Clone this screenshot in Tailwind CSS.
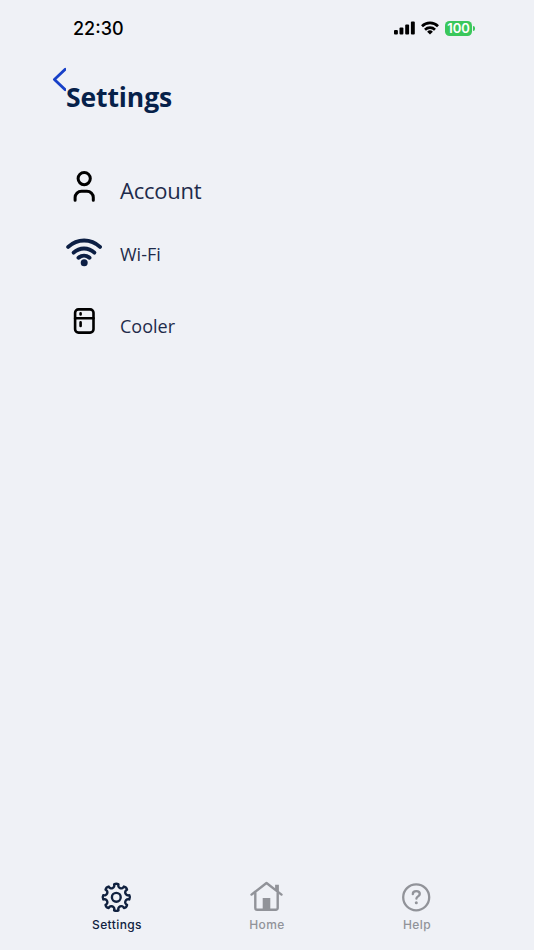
<!DOCTYPE html>
<html lang="en">
<head>
  <meta charset="UTF-8" />
  <meta name="viewport" content="width=device-width, initial-scale=1.0" />
  <title>Settings</title>
  <script src="https://cdn.jsdelivr.net/npm/@tailwindcss/browser@4"></script>
</head>
<body class="bg-[#eff1f6] text-[#1e2b4b] font-['Open_Sans',sans-serif] h-screen flex flex-col overflow-hidden">
  <!-- Status bar -->
  <div class="h-14 pl-[73px] pr-[59px] flex items-center justify-between text-black font-[Inter,sans-serif]">
    <span class="pt-px text-[18px] leading-none font-medium">22:30</span>
    <div class="flex items-center gap-[6px]">
      <svg class="w-[21px] h-[14px]" viewBox="0 0 21 14" fill="currentColor">
        <rect x="0" y="9" width="3.9" height="4.6" rx="1" />
        <rect x="5.5" y="6.5" width="3.9" height="7.1" rx="1" />
        <rect x="11.2" y="3.6" width="3.9" height="10" rx="1" />
        <rect x="16.9" y="0.6" width="3.9" height="13" rx="1" />
      </svg>
      <svg class="w-[18px] h-[14px]" viewBox="0 0 18 14" fill="none" stroke="currentColor" stroke-width="2.7">
        <path d="M1 5.2a11.4 11.4 0 0 1 16 0" />
        <path d="M4 8.7a7.1 7.1 0 0 1 10 0" />
        <path d="M9 13.6L6.1 10.8a4.1 4.1 0 0 1 5.8 0Z" fill="currentColor" stroke="none" />
      </svg>
      <div class="flex items-center gap-px">
        <div class="w-[27px] h-[15px] rounded-[4.5px] bg-[#3ac75b] text-white text-[13px] leading-none font-semibold flex items-center justify-center">100</div>
        <div class="w-[2px] h-[5px] rounded-r-full bg-[#3ac75b]"></div>
      </div>
    </div>
  </div>

  <!-- Header -->
  <header class="h-[94px] pl-[52px] pt-[11px] flex items-start">
    <svg class="w-[14px] h-[25px] shrink-0" viewBox="0 0 14 25" fill="none" stroke="#1740c8" stroke-width="2.8" stroke-linecap="round" stroke-linejoin="round">
      <path d="M13.2 2.3L2.4 12.4L13.2 22.7" />
    </svg>
    <h1 class="mt-[12px] text-[26.5px] leading-9 font-bold tracking-[-0.1px] text-[#06214a]">Settings</h1>
  </header>

  <!-- Menu -->
  <main class="flex-1 pl-[66px]">
    <a class="h-[73px] flex items-start gap-[18px]">
      <svg class="w-9 h-9 mt-[18px]" viewBox="0 0 36 36" fill="none" stroke="#000" stroke-width="3" stroke-linecap="round">
        <circle cx="18.2" cy="10.6" r="6.1" />
        <path d="M9.1 32.2v-2.6a6.4 6.4 0 0 1 6.4-6.4h5.4a6.4 6.4 0 0 1 6.4 6.4v2.6" />
      </svg>
      <span class="mt-[24px] text-[22px] leading-8 tracking-[-0.25px]">Account</span>
    </a>
    <a class="h-[72px] flex items-start gap-[18px]">
      <svg class="w-9 h-[30px] mt-[14px]" viewBox="0 0 36 30" fill="none" stroke="#0c1f44" stroke-width="3.9" stroke-linecap="round">
        <path d="M2.2 9.9c9.2-8.6 22.6-8.6 31.8 0" />
        <path d="M7.6 15.7c6-5.7 14.8-5.7 20.8 0" />
        <path d="M12.5 20.8c3.2-2.8 7.8-2.8 11 0" />
        <circle cx="18.2" cy="25.8" r="3.5" fill="#0c1f44" stroke="none" />
      </svg>
      <span class="mt-[17px] text-[18px] leading-7">Wi-Fi</span>
    </a>
    <a class="h-[72px] flex items-start gap-[18px]">
      <svg class="w-9 h-[30px] mt-[11px]" viewBox="0 0 36 30" fill="none" stroke="#000" stroke-width="2.6" stroke-linecap="round">
        <rect x="9.1" y="3.4" width="18.4" height="23.2" rx="3.4" />
        <path d="M9.1 12.2h18.4M14.6 7.4v1M14.6 16.4v3.6" />
      </svg>
      <span class="mt-[17px] text-[18px] leading-7">Cooler</span>
    </a>
  </main>

  <!-- Tab bar -->
  <nav class="h-[73px] pl-[41px] pr-[43px] grid grid-cols-3 text-[12px] leading-4 font-medium tracking-[0.4px] text-[#919399] font-[Inter,sans-serif]">
    <a class="flex flex-col items-center gap-1 pt-1 text-[#10213f]">
      <svg class="w-8 h-8" viewBox="0 0 32 32" fill="none" stroke="currentColor" stroke-width="2.4" stroke-linecap="round" stroke-linejoin="round">
        <circle cx="16.3" cy="16.3" r="4.4" />
        <path transform="translate(.3 .3)" d="M29.02 18.18A2.97 2.97 0 0 0 26.75 23.67Q26.2 26.2 23.67 26.75A2.97 2.97 0 0 0 18.18 29.02Q16 30.2 13.82 29.02A2.97 2.97 0 0 0 8.33 26.75Q5.8 26.2 5.25 23.67A2.97 2.97 0 0 0 2.98 18.18Q1.8 16 2.98 13.82A2.97 2.97 0 0 0 5.25 8.33Q5.8 5.8 8.33 5.25A2.97 2.97 0 0 0 13.82 2.98Q16 1.8 18.18 2.98A2.97 2.97 0 0 0 23.67 5.25Q26.2 5.8 26.75 8.33A2.97 2.97 0 0 0 29.02 13.82Q30.2 16 29.02 18.18Z" />
      </svg>
      <span class="pl-0.5">Settings</span>
    </a>
    <a class="flex flex-col items-center gap-1 pt-1">
      <svg class="w-[34px] h-8" viewBox="0 0 34 32" fill="none" stroke="currentColor" stroke-width="2.4" stroke-linecap="round" stroke-linejoin="round">
        <g transform="translate(.5 0)">
          <path d="M2 13.6L17 2L32 13.6" />
          <path d="M5.8 12V26.9a1.8 1.8 0 0 0 1.8 1.8h18.8a1.8 1.8 0 0 0 1.8-1.8V12" />
          <path d="M25.6 3.8h3.8v8l-3.8-3Z" fill="currentColor" stroke="none" />
          <path d="M13.2 17h7.6v11.5h-7.6Z" fill="currentColor" stroke="none" />
        </g>
      </svg>
      <span class="pl-0.5">Home</span>
    </a>
    <a class="flex flex-col items-center gap-1 pt-1">
      <svg class="w-8 h-8" viewBox="0 0 32 32" fill="none" stroke="currentColor" stroke-width="2.3" stroke-linecap="round">
        <circle cx="16.2" cy="16.3" r="13" />
        <path d="M12.8 13.2c0-2 1.5-3 3.5-3s3.5 1.2 3.5 2.9c0 2.3-3.4 2.3-3.4 4.6" />
        <circle cx="16.3" cy="21.8" r="1.5" fill="currentColor" stroke="none" />
      </svg>
      <span class="pl-0.5">Help</span>
    </a>
  </nav>
</body>
</html>
